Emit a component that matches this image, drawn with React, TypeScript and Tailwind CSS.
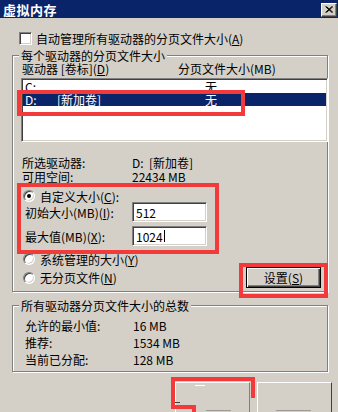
const font = "font-['Noto_Sans_CJK_SC',sans-serif]";

function Radio({ checked = false }: { checked?: boolean }) {
  return (
    <span className="relative w-[12px] h-[12px] rounded-full bg-white border border-t-[#808080] border-l-[#808080] border-b-white border-r-white shadow-[inset_1px_1px_0_#404040,inset_-1px_-1px_0_#d4d0c8] shrink-0">
      {checked && <span className="absolute left-[3px] top-[3px] w-[4px] h-[4px] rounded-full bg-black" />}
    </span>
  );
}

function Field({ value, caret = false }: { value: string; caret?: boolean }) {
  return (
    <div className="w-[75px] h-[20px] bg-white border border-t-[#808080] border-l-[#808080] border-b-white border-r-white shadow-[inset_1px_1px_0_#404040,inset_-1px_-1px_0_#d4d0c8] flex items-center pl-[3px] text-[12px] leading-[13px]">
      {value}
      {caret && <span className="w-px h-[12px] bg-black ml-px" />}
    </div>
  );
}

function Legend({ children }: { children: React.ReactNode }) {
  return (
    <span className="absolute -top-[7px] left-[6px] px-[2px] bg-[#d4d0c8] leading-[13px]">{children}</span>
  );
}

const groupBox =
  "relative ml-[12px] w-[316px] border border-[#808080] shadow-[inset_1px_1px_0_#fff,1px_1px_0_#fff]";

export default function App() {
  return (
    <div className={`relative w-[338px] h-[412px] overflow-hidden bg-[#d4d0c8] text-black text-[12px] ${font}`}>
      {/* title bar */}
      <div className="h-[18px] bg-[#0a246a] flex items-center justify-between pl-[3px] pr-[1px]">
        <span className="text-white font-bold text-[13px] leading-[15px] tracking-[0.5px]">虚拟内存</span>
        <div className="w-[16px] h-[14px] mt-[1px] bg-[#d4d0c8] border border-t-white border-l-white border-b-[#404040] border-r-[#404040] shadow-[inset_-1px_-1px_0_#808080] flex items-center justify-center">
          <svg width="8" height="7" viewBox="0 0 8 7">
            <path d="M0.5 0.5 L7 6.5 M1.5 0.5 L8 6.5 M7 0.5 L0.5 6.5 M8 0.5 L1.5 6.5" stroke="black" strokeWidth="1" />
          </svg>
        </div>
      </div>

      {/* auto manage */}
      <div className="mt-[14px] h-[13px] flex items-center pl-[19px] leading-[13px]">
        <span className="w-[13px] h-[13px] bg-white border border-t-[#808080] border-l-[#808080] border-b-white border-r-white shadow-[inset_1px_1px_0_#404040,inset_-1px_-1px_0_#d4d0c8]" />
        <span className="ml-[4px]">自动管理所有驱动器的分页文件大小(<u>A</u>)</span>
      </div>

      {/* per-drive group */}
      <div className={`${groupBox} mt-[10px] h-[237px]`}>
        <Legend>每个驱动器的分页文件大小</Legend>

        <div className="mt-[6px] h-[13px] flex pl-[9px] leading-[13px]">
          <span className="w-[156px]">驱动器 [卷标](<u>D</u>)</span>
          <span>分页文件大小(MB)</span>
        </div>

        <div className="mt-[3px] ml-[8px] w-[307px] h-[64px] bg-white border border-t-[#808080] border-l-[#808080] border-b-white border-r-white shadow-[inset_1px_1px_0_#404040,inset_-1px_-1px_0_#d4d0c8] pt-[1px] pl-[1px] pr-[1px]">
          <div className="h-[13px] flex items-center pl-[2px] leading-[13px]">
            <span className="w-[180px]">C:</span>
            <span>无</span>
          </div>
          <div className="h-[13px] flex items-center pl-[2px] leading-[13px] bg-[#0a246a] text-white">
            <span className="w-[32px]">D:</span>
            <span className="w-[148px]">[新加卷]</span>
            <span>无</span>
          </div>
        </div>

        <div className="mt-[14px] pl-[9px] leading-[13px]">
          <div className="h-[13px] flex">
            <span className="w-[110px]">所选驱动器:</span>
            <span>D:&nbsp;&nbsp;[新加卷]</span>
          </div>
          <div className="h-[13px] mt-[1px] flex">
            <span className="w-[110px]">可用空间:</span>
            <span>22434 MB</span>
          </div>
        </div>

        <div className="mt-[7px] h-[12px] flex items-center pl-[10px] leading-[13px]">
          <Radio checked />
          <span className="ml-[5px]">自定义大小(<u>C</u>):</span>
        </div>
        <div className="h-[20px] flex items-center pl-[12px] leading-[13px]">
          <span className="w-[107px]">初始大小(MB)(<u>I</u>):</span>
          <Field value="512" />
        </div>
        <div className="mt-[4px] h-[20px] flex items-center pl-[12px] leading-[13px]">
          <span className="w-[107px]">最大值(MB)(<u>X</u>):</span>
          <Field value="1024" caret />
        </div>

        <div className="mt-[7px] h-[12px] flex items-center pl-[10px] leading-[13px]">
          <Radio />
          <span className="ml-[5px]">系统管理的大小(<u>Y</u>)</span>
        </div>
        <div className="mt-[2px] h-[21px] flex items-center justify-between pl-[10px] pr-[6px] leading-[13px]">
          <div className="flex items-center">
            <Radio />
            <span className="ml-[5px]">无分页文件(<u>N</u>)</span>
          </div>
          <button className="w-[75px] h-[21px] border border-black bg-[#d4d0c8] shadow-[inset_1px_1px_0_#fff,inset_-1px_-1px_0_#404040,inset_-2px_-2px_0_#808080] flex items-center justify-center leading-[13px]">
            设置(<u>S</u>)
          </button>
        </div>
      </div>

      {/* totals group */}
      <div className={`${groupBox} mt-[13px] h-[67px]`}>
        <Legend>所有驱动器分页文件大小的总数</Legend>
        <div className="mt-[13px] pl-[12px] leading-[13px] flex flex-col gap-[4px]">
          <div className="h-[13px] flex">
            <span className="w-[108px]">允许的最小值:</span>
            <span>16 MB</span>
          </div>
          <div className="h-[13px] flex">
            <span className="w-[108px]">推荐:</span>
            <span>1534 MB</span>
          </div>
          <div className="h-[13px] flex">
            <span className="w-[108px]">当前已分配:</span>
            <span>128 MB</span>
          </div>
        </div>
      </div>

      {/* dialog buttons (cut off) */}
      <div className="mt-[10px] ml-[175px] flex gap-[7px]">
        <div className="relative w-[75px] h-[32px] border-t border-l border-r border-t-white border-l-white border-r-[#808080]">
          <span className="absolute top-[2px] left-[19px] w-[10px] h-px bg-white" />
          <span className="absolute top-[19px] -left-px w-[5px] h-px bg-[#404040]" />
          <span className="absolute top-[27px] left-[30px] w-[25px] h-px bg-[#9a9a9a]" />
        </div>
        <div className="relative w-[75px] h-[32px] border-t border-l border-r border-t-white border-l-white border-r-[#404040]">
          <span className="absolute top-[27px] left-[18px] w-[35px] h-px bg-[#9a9a9a]" />
        </div>
      </div>

      {/* red annotations */}
      <svg className="absolute inset-0 pointer-events-none" width="338" height="412" viewBox="0 0 338 412">
        <g fill="none" stroke="#f23a3a" strokeWidth="4">
          <rect x="19" y="92" width="224" height="22" />
          <rect x="19" y="185" width="198" height="67" />
          <rect x="241" y="265" width="85" height="31" />
          <path d="M253 398 V379 H173 V407 H194 V414" />
        </g>
      </svg>
    </div>
  );
}
